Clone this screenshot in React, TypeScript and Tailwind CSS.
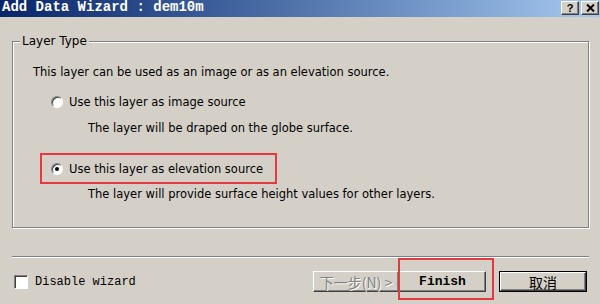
function Radio({ checked }: { checked?: boolean }) {
  return (
    <span className="w-[12px] h-[12px] rounded-full border border-t-[#808080] border-l-[#808080] border-r-white border-b-white bg-white shadow-[inset_1px_1px_0_#404040] flex items-center justify-center shrink-0">
      {checked && <span className="w-[4px] h-[4px] rounded-full bg-black" />}
    </span>
  );
}

function TitleButton({ children }: { children: React.ReactNode }) {
  return (
    <div className="w-[18px] h-[14px] bg-[#d4d0c8] border border-t-white border-l-white border-r-[#404040] border-b-[#404040] shadow-[inset_-1px_-1px_0_#808080] flex items-center justify-center">
      {children}
    </div>
  );
}

export default function App() {
  return (
    <div className="w-[600px] h-[304px] bg-[#d4d0c8] flex flex-col overflow-hidden font-['DejaVu_Sans',sans-serif] text-[11.5px] leading-[14px] text-black">
      {/* title bar */}
      <div className="h-[17px] shrink-0 flex items-start justify-between bg-linear-to-r from-[#0a246a] to-[#a6caf0] pl-[2px] pr-[1px]">
        <span className="font-['Liberation_Mono',monospace] font-bold text-[14px] leading-[15px] text-white">
          Add Data Wizard : dem10m
        </span>
        <div className="flex gap-[2px] pt-[1px]">
          <TitleButton>
            <span className="font-['Liberation_Sans',sans-serif] font-bold text-[11px] leading-none">?</span>
          </TitleButton>
          <TitleButton>
            <svg width="9" height="8" viewBox="0 0 9 8">
              <path d="M1 0.5 L8 7.5 M8 0.5 L1 7.5" stroke="#000" strokeWidth="2" />
            </svg>
          </TitleButton>
        </div>
      </div>

      {/* group box */}
      <fieldset className="ml-[12px] mt-[17px] w-[577px] border border-[#808080] shadow-[inset_1px_1px_0_#fff,1px_1px_0_#fff] pb-[26px]">
        <legend className="ml-[7px] px-[2px] bg-[#d4d0c8] text-[12px] leading-[14px]">Layer Type</legend>
        <div className="pl-[20px] flex flex-col items-start">
          <p className="mt-[17px]">This layer can be used as an image or as an elevation source.</p>
          <div className="mt-[16px] ml-[18px] flex items-center gap-[6px]">
            <Radio />
            <span>Use this layer as image source</span>
          </div>
          <p className="mt-[12px] ml-[55px]">The layer will be draped on the globe surface.</p>
          <div className="mt-[18px] ml-[7px] w-[237px] h-[31px] border-2 border-[#e3393f] pl-[9px] flex items-center gap-[6px]">
            <Radio checked />
            <span>Use this layer as elevation source</span>
          </div>
          <p className="mt-[3px] ml-[55px]">The layer will provide surface height values for other layers.</p>
        </div>
      </fieldset>

      {/* separator */}
      <div className="ml-[12px] mt-[28px] w-[577px] h-[2px] border-t border-t-[#808080] border-b border-b-white" />

      {/* bottom row */}
      <div className="relative mt-[13px] h-[21px] flex items-center">
        <label className="ml-[14px] flex items-center gap-[7px]">
          <span className="w-[14px] h-[14px] bg-white border border-t-[#808080] border-l-[#808080] border-r-white border-b-white shadow-[inset_1px_1px_0_#404040]" />
          <span className="font-['Liberation_Mono',monospace] text-[12px]">Disable wizard</span>
        </label>
        <div className="ml-auto mr-[13px] flex">
          <div className="w-[86px] h-[21px] border border-t-white border-l-white border-r-[#404040] border-b-[#404040] shadow-[inset_-1px_-1px_0_#808080] flex items-center justify-center font-['Noto_Sans_CJK_SC',sans-serif] text-[14px] leading-none text-[#808080] [text-shadow:1px_1px_0_#fff]">
            下一步(N) &gt;
          </div>
          <div className="w-[87px] h-[21px] border border-t-white border-l-white border-r-[#404040] border-b-[#404040] shadow-[inset_-1px_-1px_0_#808080] flex items-center justify-center font-['Liberation_Mono',monospace] font-bold text-[13px]">
            Finish
          </div>
          <div className="ml-[13px] w-[88px] h-[21px] border border-black flex">
            <div className="flex-1 border border-t-white border-l-white border-r-[#404040] border-b-[#404040] shadow-[inset_-1px_-1px_0_#808080] flex items-center justify-center font-['Noto_Sans_CJK_SC',sans-serif] text-[14px] leading-none">
              取消
            </div>
          </div>
        </div>
        {/* annotation around Finish */}
        <div className="absolute left-[398px] top-[-13px] w-[96px] h-[42px] border-2 border-[#e3393f]" />
      </div>
    </div>
  );
}
